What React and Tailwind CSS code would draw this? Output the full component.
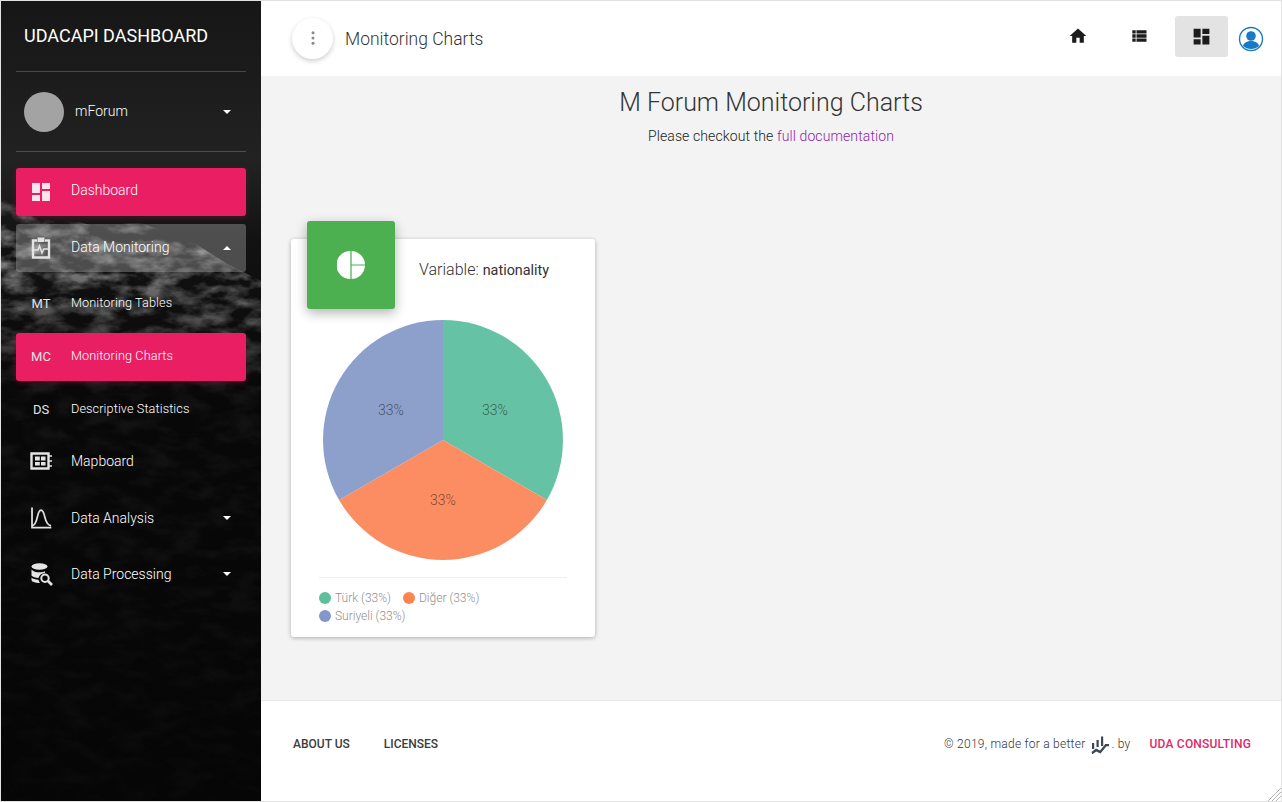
const Caret = ({ up }) => (
  <span
    className={
      up
        ? 'w-0 h-0 border-x-[4.5px] border-b-[4.5px] border-x-transparent border-b-white'
        : 'w-0 h-0 border-x-[4.5px] border-t-[4.5px] border-x-transparent border-t-white'
    }
  />
);

const DashboardIcon = ({ className }) => (
  <svg viewBox="0 0 24 24" className={className} fill="currentColor">
    <path d="M3 13h8V3H3v10zm0 8h8v-6H3v6zm10 0h8V11h-8v10zm0-18v6h8V3h-8z" />
  </svg>
);

const MonitorIcon = () => (
  <svg viewBox="0 0 24 24" className="w-6 h-6" fill="none" stroke="currentColor" strokeWidth="2.4">
    <path d="M8 4.500H4v17h16v-17h-4" />
    <path d="M8.500 1.500h7v4.500h-7z" fill="currentColor" stroke="none" />
    <path d="M5 14h4l1.500-4 2.500 7 1.800-4H19" strokeWidth="1.500" />
  </svg>
);

const MapboardIcon = () => (
  <svg viewBox="0 0 24 24" className="w-6 h-6" fill="none" stroke="currentColor">
    <path d="M2.500 4.500h17v15h-17z" strokeWidth="2.400" />
    <path d="M6 7.500h4.800v4H6zM12 7.500h4.500v4H12zM6 13h4.800v3.500H6zM12 13h4.500v3.500H12z" fill="currentColor" stroke="none" />
    <path d="M20 7h3M20 12h3M20 17h3" strokeWidth="1.600" />
  </svg>
);

const AnalysisIcon = () => (
  <svg viewBox="0 0 24 24" className="w-[22px] h-[22px]" fill="none" stroke="currentColor" strokeWidth="1.900">
    <path d="M2.200 0.500v22h21" />
    <path d="M2.500 20.500c3.500-1 4.500-5 5.500-9.500s2-7.500 4-7.500 3.200 3 4.200 7.500 2.300 8.500 6.800 9.500" />
  </svg>
);

const DataSearchIcon = () => (
  <svg viewBox="0 0 24 24" className="w-6 h-6" fill="currentColor">
    <ellipse cx="10.500" cy="4.500" rx="8" ry="3.200" />
    <path d="M2.500 7.500c1.500 2 4.500 2.800 8 2.800 2 0 4-.3 5.500-1v1.500c-3.500.5-6 2.700-6.500 5.200-3-.1-5.800-1-7-2.500z" />
    <path d="M2.500 15.500c1.200 1.300 3.800 2.100 7 2.300.2 1.200.7 2.300 1.500 3.200-4.500.1-8.500-1.300-8.500-3z" />
    <path
      d="M16 11.500a4.700 4.700 0 1 0 0 9.400 4.700 4.700 0 0 0 0-9.400zm0 2a2.700 2.700 0 1 1 0 5.400 2.700 2.700 0 0 1 0-5.400z"
      fillRule="evenodd"
    />
    <path d="M19 19l4 4" stroke="currentColor" strokeWidth="2.600" />
  </svg>
);

const NavItem = ({ icon, label, active, open, caret, sub, className, labelClass }) => (
  <div
    className={
      'relative h-12 mx-[15px] rounded-[3px] flex items-center pl-[13px] pr-[15px] ' +
      (active
        ? 'bg-[#e91e63] shadow-[0_2px_6px_rgba(233,30,99,0.2)] '
        : open
        ? 'bg-[rgba(200,200,200,0.33)] '
        : '') +
      className
    }
  >
    <span className={'w-6 h-6 flex items-center justify-center shrink-0 text-[#e4e4e4] ' + (sub ? 'mb-[2px]' : '')}>
      {sub ? <span className="text-[13px] leading-none font-normal text-[#e4e4e4]">{sub}</span> : icon}
    </span>
    <span
      className={
        (sub ? 'text-[12.7px] tracking-[0.1px] pb-[2px] ' : 'text-[14px] ') +
        'ml-[18px] flex-1 font-light text-white ' +
        (labelClass || '')
      }
    >
      {label}
    </span>
    {caret && <Caret up={open} />}
  </div>
);

const Sidebar = () => (
  <aside className="relative w-[260px] shrink-0 bg-[#060606] overflow-hidden">
    {/* mountain photo behind the menu */}
    <svg viewBox="0 0 260 800" className="absolute inset-0 w-full h-full" preserveAspectRatio="none">
      <defs>
        <linearGradient id="sky" x1="0" y1="0" x2="0" y2="1">
          <stop offset="0" stopColor="#161616" />
          <stop offset="0.2" stopColor="#222222" />
          <stop offset="0.3" stopColor="#121212" />
          <stop offset="0.5" stopColor="#080808" />
          <stop offset="1" stopColor="#060606" />
        </linearGradient>
        <linearGradient id="rockFade" x1="0" y1="0" x2="0" y2="1">
          <stop offset="0" stopColor="#ffffff" stopOpacity="0.3" />
          <stop offset="0.1" stopColor="#ffffff" stopOpacity="0.9" />
          <stop offset="0.2" stopColor="#ffffff" stopOpacity="0.55" />
          <stop offset="0.34" stopColor="#ffffff" stopOpacity="0.08" />
          <stop offset="1" stopColor="#ffffff" stopOpacity="0.03" />
        </linearGradient>
        <mask id="rockMask">
          <path d="M0 185L40 212 90 224 140 222 190 240 225 262 260 280V800H0z" fill="url(#rockFade)" />
        </mask>
        <filter id="rock" x="0" y="0" width="100%" height="100%">
          <feTurbulence type="fractalNoise" baseFrequency="0.035 0.07" numOctaves="4" seed="7" />
          <feColorMatrix values="0 0 0 0 0.3  0 0 0 0 0.3  0 0 0 0 0.3  2.600 0 0 0 -1.000" />
        </filter>
      </defs>
      <rect width="260" height="800" fill="url(#sky)" />
      <rect width="260" height="800" filter="url(#rock)" mask="url(#rockMask)" />
    </svg>

    <div className="relative">
      <div className="mx-[15px] h-[71px] flex items-center pl-2 border-b border-[rgba(180,180,180,0.3)] pb-[2px]">
        <span className="text-[18px] text-white font-normal whitespace-nowrap">UDACAPI DASHBOARD</span>
      </div>
      <div className="mx-[15px] h-[80px] flex items-center pl-2 pr-[15px] border-b border-[rgba(180,180,180,0.3)]">
        <span className="w-10 h-10 rounded-full bg-[#a3a3a3] shrink-0" />
        <span className="ml-[11px] flex-1 text-[14px] font-light text-white">mForum</span>
        <Caret />
      </div>

      <NavItem
        className="mt-4"
        active
        icon={<DashboardIcon className="w-6 h-6 text-[#fce4ec]" />}
        label="Dashboard"
        labelClass="pb-[4px]"
      />
      <NavItem className="mt-2" open caret icon={<MonitorIcon />} label="Data Monitoring" labelClass="pb-[2px]" />
      <NavItem className="mt-2" sub="MT" label="Monitoring Tables" />
      <NavItem className="mt-[5px]" active sub="MC" label="Monitoring Charts" />
      <NavItem className="mt-[5px]" sub="DS" label="Descriptive Statistics" />
      <NavItem className="mt-[3px]" icon={<MapboardIcon />} label="Mapboard" />
      <NavItem className="mt-[9px]" caret icon={<AnalysisIcon />} label="Data Analysis" />
      <NavItem className="mt-2" caret icon={<DataSearchIcon />} label="Data Processing" />
    </div>
  </aside>
);

const Header = () => (
  <header className="h-[75px] shrink-0 bg-white flex items-center pl-[31px] pr-[17px]">
    <button className="w-[41px] h-[41px] rounded-full bg-white shadow-[0_2px_5px_rgba(0,0,0,0.2)] flex items-center justify-center mt-[-1px]">
      <svg viewBox="0 0 24 24" className="w-[18px] h-[18px]" fill="#8a8a8a">
        <circle cx="12" cy="5" r="2" />
        <circle cx="12" cy="12" r="2" />
        <circle cx="12" cy="19" r="2" />
      </svg>
    </button>
    <span className="ml-3 mt-[2px] text-[17.5px] font-light text-[#333333]">Monitoring Charts</span>
    <div className="ml-auto flex items-center mt-[-5px]">
      <svg viewBox="0 0 24 24" className="w-5 h-5 mr-[41px] ml-[2px]" fill="#1c1c1c">
        <path d="M10 20v-6h4v6h5v-8h3L12 3 2 12h3v8z" />
      </svg>
      <svg viewBox="0 0 24 24" className="w-5 h-5 mr-[26px]" fill="#1c1c1c">
        <path d="M4 14h4v-4H4v4zm0 5h4v-4H4v4zM4 9h4V5H4v4zm5 5h12v-4H9v4zm0 5h12v-4H9v4zM9 5v4h12V5H9z" />
      </svg>
      <span className="w-[53px] h-[41px] rounded-[3px] bg-[#e3e3e3] flex items-center justify-center">
        <DashboardIcon className="w-[21px] h-[21px] text-[#1c1c1c]" />
      </span>
      <svg viewBox="0 0 26 26" className="w-[26px] h-[26px] ml-[10px] mt-[5px]">
        <circle cx="13" cy="13" r="11.500" fill="none" stroke="#1a7ac4" strokeWidth="1.400" />
        <circle cx="13" cy="10" r="4.800" fill="#1a7ac4" />
        <path d="M5 20c.5-3.500 4.500-5 8-5s7.500 1.500 8 5c-2 1.800-5 3-8 3s-6-1.200-8-3z" fill="#1a7ac4" />
      </svg>
    </div>
  </header>
);

// green, orange and blue wedges of the pie, centre 120,120 radius 120
const wedges = [
  { d: 'M120 120L120 0A120 120 0 0 1 223.9 180Z', fill: '#66c2a5', x: 172, y: 90 },
  { d: 'M120 120L223.9 180A120 120 0 0 1 16.1 180Z', fill: '#fc8d62', x: 120, y: 180 },
  { d: 'M120 120L16.1 180A120 120 0 0 1 120 0Z', fill: '#8da0cb', x: 68, y: 90 },
];

const PieChart = () => (
  <svg viewBox="0 0 240 240" className="w-60 h-60 block">
    {wedges.map((w) => (
      <path key={w.fill} d={w.d} fill={w.fill} />
    ))}
    {wedges.map((w) => (
      <text
        key={w.x + '-' + w.y}
        x={w.x}
        y={w.y + 5}
        textAnchor="middle"
        fontSize="14"
        fontWeight="300"
        fill="rgba(0,0,0,0.55)"
      >
        33%
      </text>
    ))}
  </svg>
);

const LegendItem = ({ color, label }) => (
  <span className="flex items-center">
    <span className="w-3 h-3 rounded-full mr-1" style={{ backgroundColor: color }} />
    <span className="text-[12px] font-light text-[#8f8f8f] leading-[18px]">{label}</span>
  </span>
);

const ChartCard = () => (
  <div className="relative w-[304px] h-[398px] bg-white rounded-[3px] shadow-[0_1px_4px_rgba(0,0,0,0.3)]">
    <div className="absolute left-[16px] top-[-18px] w-[88px] h-[88px] rounded-[3px] bg-[#4caf50] shadow-[0_4px_12px_rgba(0,0,0,0.3)] flex items-center justify-center">
      <svg viewBox="0 0 28 28" className="w-7 h-7" fill="#ffffff">
        <path d="M13.400 0v28A14 14 0 0 1 13.400 0z" />
        <path d="M14.600 0A14 14 0 0 1 28 13.400H14.600z" />
        <path d="M14.600 14.600H28A14 14 0 0 1 14.600 28z" />
      </svg>
    </div>
    <div className="pl-[128px] pt-[19px] h-[81px] text-[#333333] whitespace-nowrap">
      <span className="text-[16px] font-light">Variable: </span>
      <span className="text-[14.4px] font-normal">nationality</span>
    </div>
    <div className="flex justify-center">
      <PieChart />
    </div>
    <div className="mx-[28px] mt-[17px] border-t border-[#eeeeee] pt-[11px]">
      <div className="flex gap-3">
        <LegendItem color="#5ec09b" label="Türk (33%)" />
        <LegendItem color="#fc8450" label="Diğer (33%)" />
      </div>
      <LegendItem color="#8397cb" label="Suriyeli (33%)" />
    </div>
  </div>
);

const FooterLogo = () => (
  <svg viewBox="0 0 20 20" className="w-5 h-5 ml-[5px] mr-[1px]" fill="#3c4858">
    <path d="M2 9h2.200v6H2zM6.500 6h2.200v7H6.500zM11 2.500h2.200v9.500H11zM15 10h4v2.200h-4z" />
    <path d="M1.500 18l4.500-3.500 4 2 5-6 1.800 1.300-6.300 7.700-4.200-2-4 2.800z" />
  </svg>
);

const Footer = () => (
  <footer className="relative h-[101px] shrink-0 bg-white border-t border-[#e7e7e7] flex items-center pl-[32px] pr-[30px] pb-[14px]">
    <span className="text-[12px] font-medium text-[#3c3c3c]">ABOUT US</span>
    <span className="ml-[34px] text-[12px] font-medium text-[#3c3c3c]">LICENSES</span>
    <div className="ml-auto flex items-center text-[12px] font-light text-[#333333] tracking-[0.25px]">
      <span>© 2019, made for a better</span>
      <FooterLogo />
      <span>. by</span>
      <span className="ml-[19px] font-medium text-[#e0286a] tracking-[0.2px]">UDA CONSULTING</span>
    </div>
    <svg viewBox="0 0 14 14" className="absolute right-0 bottom-0 w-[14px] h-[14px]" stroke="#b5b5b5" strokeWidth="1">
      <path d="M1 14L14 1M5 14L14 5M9 14L14 9" />
    </svg>
  </footer>
);

const App = () => (
  <div className="w-[1282px] h-[802px] border border-[#e2e2e2] flex overflow-hidden font-['Roboto',sans-serif] bg-[#f3f3f3]">
    <Sidebar />
    <main className="flex-1 flex flex-col min-w-0">
      <Header />
      <div className="flex-1 bg-[#f3f3f3] pl-[30px]">
        <div className="text-center pr-[30px] pt-[11px]">
          <h1 className="text-[25px] font-light text-[#333333] leading-[32px]">M Forum Monitoring Charts</h1>
          <p className="mt-[7px] text-[14px] font-light text-[#222222] tracking-[0.11px]">
            Please checkout the <span className="text-[#8e24aa]">full documentation</span>
          </p>
        </div>
        <div className="mt-[92px]">
          <ChartCard />
        </div>
      </div>
      <Footer />
    </main>
  </div>
);

export default App;
